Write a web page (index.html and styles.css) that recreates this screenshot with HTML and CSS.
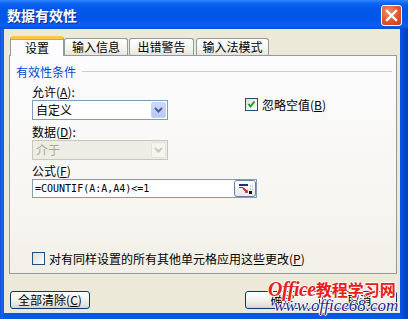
FILE: index.html
```html
<!DOCTYPE html>
<html lang="zh-CN">
<head>
<meta charset="utf-8">
<title>数据有效性</title>
<link rel="stylesheet" href="styles.css">
</head>
<body>
<div class="window">
  <div class="titlebar">
    <span class="title">数据有效性</span>
    <span class="close">
      <svg width="21" height="21" viewBox="0 0 21 21"><path d="M6 6 L15 15 M15 6 L6 15" stroke="#fff" stroke-width="2.4" stroke-linecap="square"/></svg>
    </span>
  </div>
  <div class="content">
    <div class="tabs">
      <div class="tab active">设置</div>
      <div class="tab">输入信息</div>
      <div class="tab">出错警告</div>
      <div class="tab">输入法模式</div>
    </div>
    <div class="panel">
      <div class="group-head"><span class="group-title">有效性条件</span><span class="rule"></span></div>
      <div class="criteria">
        <div class="col-left">
          <div class="lbl first">允许(<u>A</u>):</div>
          <div class="combo">
            <span class="combo-text">自定义</span>
            <span class="drop"><svg width="9" height="6" viewBox="0 0 9 6"><path d="M1 1 L4.5 4.5 L8 1" fill="none" stroke="#4D6185" stroke-width="2"/></svg></span>
          </div>
          <div class="lbl second">数据(<u>D</u>):</div>
          <div class="combo disabled">
            <span class="combo-text">介于</span>
            <span class="drop"><svg width="9" height="6" viewBox="0 0 9 6"><path d="M1 1 L4.5 4.5 L8 1" fill="none" stroke="#C9C7BA" stroke-width="2"/></svg></span>
          </div>
        </div>
        <div class="check ignore">
          <span class="box"><svg width="11" height="11" viewBox="0 0 11 11"><path d="M2.5 5 L4.5 7.5 L8.5 2.5" fill="none" stroke="#21A121" stroke-width="2"/></svg></span>
          <span>忽略空值(<u>B</u>)</span>
        </div>
      </div>
      <div class="lbl third">公式(<u>F</u>)</div>
      <div class="formula">
        <span class="formula-text">=COUNTIF(A:A,A4)&lt;=1</span>
        <span class="refbtn">
          <svg width="19" height="15" viewBox="0 0 19 15">
            <rect x="3" y="3" width="9" height="2" fill="#1B2E84"/>
            <rect x="3" y="6" width="4" height="1" fill="#D42A1C"/>
            <path d="M7 7 L11 11" stroke="#D42A1C" stroke-width="2"/>
            <path d="M12 12 L8.5 11.5 L11.5 8.5 Z" fill="#D42A1C"/>
            <path d="M14 5 H17 M14 8 H17" stroke="#9AA3B5" stroke-width="1" stroke-dasharray="1 1"/>
            <rect x="13" y="10" width="3" height="3" fill="#111"/>
          </svg>
        </span>
      </div>
      <div class="check apply-all">
        <span class="box"></span>
        <span>对有同样设置的所有其他单元格应用这些更改(<u>P</u>)</span>
      </div>
    </div>
    <div class="footer">
      <span class="btn clear">全部清除(<u>C</u>)</span>
      <span class="btn ok">确定</span>
      <span class="btn cancel">取消</span>
    </div>
  </div>
  <div class="watermark">
    <div class="wm-top"><span class="wm-en">Office</span>教程学习网</div>
    <div class="wm-url">www.office68.com</div>
  </div>
</div>
</body>
</html>
```

FILE: styles.css
```css
* { box-sizing: border-box; }
html, body { margin: 0; padding: 0; }
body {
  font-family: "Noto Sans CJK SC", "Liberation Sans", sans-serif;
  font-size: 12px;
  color: #000;
  background: #fff;
}
u { text-decoration: underline; text-underline-offset: 1px; }

.window {
  position: relative;
  width: 408px;
  height: 319px;
  background: linear-gradient(to right, #0A4FD8 0, #1F68F0 2px, #0756E6 4px, #0756E6 400px, #0748D0 404px, #0A3FB8 408px);
  display: flex;
  flex-direction: column;
  overflow: hidden;
}

.titlebar {
  height: 29px;
  flex: none;
  display: flex;
  align-items: center;
  padding: 0 6px 0 7px;
  background: linear-gradient(to bottom, #2F86FF 0, #1066F2 3px, #0058EA 8px, #0055E5 18px, #0A5FF0 25px, #0650DA 29px);
}
.title {
  color: #fff;
  font-weight: bold;
  font-size: 14px;
  text-shadow: 1px 1px 0 #0A2E92;
  flex: 1;
}
.close {
  width: 21px;
  height: 21px;
  border: 1px solid #fff;
  border-radius: 3px;
  background: radial-gradient(circle at 35% 30%, #F08C6C 0, #E2542C 55%, #C2391A 100%);
  display: flex;
  align-items: center;
  justify-content: center;
  margin-top: 1px;
}
.close svg { display: block; margin: -1px; }

.content {
  margin: 0 8px 6px 4px;
  height: 284px;
  background: #ECE9D8;
  display: flex;
  flex-direction: column;
}

.tabs {
  display: flex;
  align-items: flex-end;
  height: 18px;
  margin-top: 8px;
  padding-left: 6px;
  position: relative;
  z-index: 2;
}
.tab {
  height: 17px;
  border: 1px solid #919B9C;
  border-bottom: none;
  border-radius: 3px 3px 0 0;
  background: linear-gradient(to bottom, #FFFFFF, #F3F3EF 60%, #E6E4DB);
  text-align: center;
  line-height: 15px;
  font-size: 12px;
}
.tab:nth-child(1) { width: 54px; }
.tab:nth-child(2) { width: 64px; }
.tab:nth-child(3) { width: 65px; margin-left: 1px; }
.tab:nth-child(4) { width: 73px; margin-left: 2px; }
.tab.active {
  height: 20px;
  margin-bottom: -1px;
  background: #FCFCFE;
  border-top: 3px solid #FFC83C;
  box-shadow: inset 0 1px 0 #E6A02E;
  line-height: 15px;
  padding-top: 1px;
}

.panel {
  margin-left: 5px;
  width: 388px;
  height: 219px;
  border: 1px solid #919B9C;
  background: linear-gradient(to bottom, #FCFCFE, #F6F5F0 70%, #F1EFE6);
  display: flex;
  flex-direction: column;
  padding: 7px 4px 8px 22px;
}

.group-head {
  display: flex;
  align-items: center;
  height: 16px;
  margin-left: -16px;
}
.group-title { color: #0046D5; }
.rule {
  flex: 1;
  height: 1px;
  margin-left: 6px;
  background: #D0D0BF;
}

.criteria { display: flex; }
.col-left { width: 136px; display: flex; flex-direction: column; }
.lbl { height: 16px; line-height: 16px; }
.lbl.first { margin-top: 5px; }
.lbl.second { margin-top: 4px; }
.lbl.third { margin-top: 3px; }

.combo {
  height: 20px;
  border: 1px solid #7F9DB9;
  background: #fff;
  display: flex;
  align-items: center;
  padding: 0 1px 0 3px;
}
.combo-text { flex: 1; line-height: 16px; }
.drop {
  width: 15px;
  height: 16px;
  border: 1px solid #C3D3FD;
  border-radius: 2px;
  background: linear-gradient(to bottom, #C9DAFD, #B4C9F6);
  display: flex;
  align-items: center;
  justify-content: center;
}
.combo.disabled { background: #EEEDE5; border-color: #C9C7BA; }
.combo.disabled .combo-text { color: #ACA899; }
.combo.disabled .drop { background: #F5F4EE; border-color: #E4E2D8; }

.check { display: flex; align-items: center; gap: 4px; }
.box {
  width: 13px;
  height: 13px;
  border: 1px solid #1C5180;
  background: linear-gradient(135deg, #DCDCD7, #FFFFFF);
  display: flex;
  align-items: center;
  justify-content: center;
  flex: none;
}
.ignore { margin-left: 77px; margin-top: 18px; align-self: flex-start; height: 14px; }

.formula {
  width: 225px;
  height: 19px;
  border: 1px solid #7F9DB9;
  background: #fff;
  display: flex;
  align-items: center;
  padding: 0 0 0 2px;
}
.formula-text {
  flex: 1;
  font-family: "DejaVu Sans Mono", "Liberation Mono", monospace;
  font-size: 10px;
  line-height: 14px;
  padding-top: 1px;
}
.refbtn {
  width: 22px;
  height: 17px;
  border: 1px solid #6D7F9F;
  border-radius: 3px;
  background: linear-gradient(to bottom, #FFFFFF, #E6E8EE);
  display: flex;
  align-items: center;
  justify-content: center;
}

.apply-all { margin-top: auto; height: 14px; }

.footer {
  display: flex;
  margin-top: 17px;
  padding: 0 3px 0 6px;
}
.btn {
  height: 18px;
  border: 1px solid #003C74;
  border-radius: 3px;
  background: linear-gradient(to bottom, #FFFFFF, #F2F1EC 50%, #E3E0D6 85%, #D6D0C5);
  display: flex;
  align-items: center;
  justify-content: center;
  line-height: 14px;
}
.btn.clear { width: 80px; }
.btn.ok { width: 75px; margin-left: auto; }
.btn.cancel { width: 75px; margin-left: 2px; }

.watermark {
  position: absolute;
  left: 268px;
  top: 280px;
  width: 135px;
  pointer-events: none;
}
.wm-top {
  color: #E8201A;
  font-family: "Noto Sans CJK SC", sans-serif;
  font-weight: bold;
  font-size: 16px;
  line-height: 19px;
  text-shadow: 1px 0 0 #fff, -1px 0 0 #fff, 0 1px 0 #fff, 0 -1px 0 #fff;
  white-space: nowrap;
}
.wm-en {
  font-family: "Liberation Serif", serif;
  font-style: italic;
  font-size: 20px;
  font-weight: bold;
  letter-spacing: -0.5px;
}
.wm-url {
  margin-left: 6px;
  margin-top: -2px;
  color: #2B1E86;
  font-family: "Liberation Serif", serif;
  font-style: italic;
  font-size: 17px;
  line-height: 17px;
  text-shadow: 1px 0 0 #fff, -1px 0 0 #fff, 0 1px 0 #fff, 0 -1px 0 #fff;
  white-space: nowrap;
}
```
